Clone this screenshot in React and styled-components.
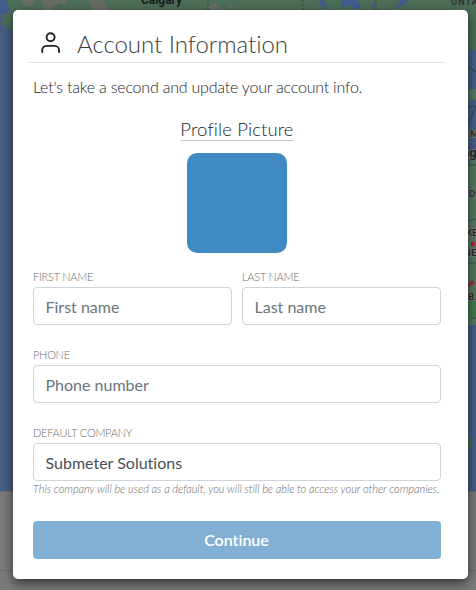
import styled, { createGlobalStyle } from "styled-components"
import { useState } from "react"

const GlobalStyle = createGlobalStyle`
* {
  box-sizing: border-box;
}
body {
  margin: 0;
  overflow: hidden;
  background-color: #797979;
  color: #212529;
  font-family: Lato, "Liberation Sans", sans-serif;
  font-size: 16px;
  line-height: 1.5;
  font-variant-ligatures: none;
}
`
const Container = styled.div`
height: 100vh;
padding: 10px 8px 11px 13px;
`
const Map = styled.svg`
position: absolute;
top: 0;
left: 0;
z-index: -1;
`
const Modal = styled.div`
width: 455px;
height: 569px;
padding: 16px 23px 20px 16px;
border-radius: 5px;
background-color: white;
box-shadow: 0 4px 12px rgba(0, 0, 0, 0.6);
`
const Header = styled.div`
display: flex;
align-items: center;
height: 37px;
padding-left: 11px;
border-bottom: 1px solid #dee2e6;
`
const Title = styled.h1`
margin: 0 0 0 15px;
font-size: 24px;
font-weight: 300;
line-height: 36px;
letter-spacing: -0.03px;
color: #3a3e42;
`
const Body = styled.div`
padding: 12px 4px 0;
`
const Intro = styled.p`
margin: 0;
font-weight: 300;
letter-spacing: -0.21px;
`
const Picture = styled.div`
display: flex;
flex-direction: column;
align-items: center;
margin-top: 20px;
`
const PictureTitle = styled.span`
height: 22px;
margin-bottom: 12px;
border-bottom: 1px solid #c8c8c8;
font-size: 18.5px;
font-weight: 300;
line-height: 20px;
letter-spacing: 0.12px;
`
const Avatar = styled.div`
width: 100px;
height: 100px;
border-radius: 10px;
background-color: #3f8ac2;
`
const Row = styled.div`
display: flex;
gap: 10px;
margin-top: ${props => props.$first ? "16px" : "22px"};
`
const Field = styled.label`
flex: 1;
min-width: 0;
display: flex;
flex-direction: column;
`
const Label = styled.span`
height: 18px;
font-size: 11px;
font-weight: 300;
line-height: 16px;
letter-spacing: -0.25px;
color: #6c6c6c;
text-transform: uppercase;
`
const Input = styled.input`
width: 100%;
height: 38px;
padding: 6px 11.5px;
border: 1px solid #ced4da;
border-radius: 4px;
outline: none;
background-color: white;
color: #495057;
font: inherit;
&::placeholder {
  color: #6c757d;
  opacity: 1;
}
`
const Hint = styled.em`
height: 16px;
font-size: 11px;
font-weight: 300;
line-height: 16px;
white-space: nowrap;
letter-spacing: -0.01px;
color: #666;
`
const Button = styled.button`
width: 100%;
height: 38px;
margin-top: 24px;
padding: 0 7px 0 6px;
border: none;
border-radius: 4px;
background-color: #82b0d5;
color: white;
font: inherit;
font-weight: 600;
`

const UserIcon = () => (
  <svg width="22" height="24" viewBox="0 0 22 24" fill="none" stroke="#212529" strokeWidth="1.9" strokeLinecap="round">
    <circle cx="10.6" cy="5.2" r="4" />
    <path d="M2.2 20.1v-2a4.2 4.2 0 0 1 4.2-4.2h8.4a4.2 4.2 0 0 1 4.2 4.2v2" />
  </svg>
)

const MapBackground = () => (
  <Map width="476" height="590" fontFamily="Roboto, sans-serif" fontWeight="700" fill="#171a1b">
    <rect width="476" height="491" fill="#475e85" />
    <path d="M0 0h476v50h-8V11H13v21l-5-5-8-3 4-5-4-5z" fill="#4d6e57" />
    <path d="M20 0h16l-3 5-8 2zM41 0h27l-4 5-5-2-9 7h-6zM88 0h15l6 10H94zM207 6l8-3 7 6h-12zM228 3l5 4-3 3z" fill="#6a6d66" />
    <path d="M0 0h6l4 8-3 6-7 1zM318 0h5l3 5-3 5zM341 0h16l5 7-6 3-7-5-6 4zM371 4l5-2-2 8zM401 0h8l-7 6-8 3z" fill="#435d8d" />
    <path d="M208 0v10M303 0v10M376 0v10" stroke="#35483e" strokeDasharray="2 2" />
    {/* east coast */}
    <path d="M468 89h8v12l-4-2-4 4zM476 155v170h-8V164z" fill="#577762" />
    <path d="M468 67l8 5" stroke="#313e3c" />
    <path d="M468 107l8-1M476 107l-8 16M468 165h8M468 221l8-2M468 263h8M468 318h8" stroke="#313e3c" strokeDasharray="2 1" fill="none" />
    <path d="M468 303l8-12v25l-8 4z" fill="#437a50" />
    <rect x="471" y="242" width="4" height="4" fill="#a52730" />
    <path d="M468 286l3-3 3-1" stroke="#a52730" strokeWidth="3" fill="none" />
    <ellipse cx="468" cy="442" rx="4" ry="6" fill="#456c50" />
    <text x="141" y="4" fontSize="12" textLength="41">Calgary</text>
    <text x="451" y="5" fontSize="9" letterSpacing="1" fill="#303433">ONTARIO</text>
    <g fontSize="9.500" fontWeight="500" fill="#252928" stroke="#747b75" strokeWidth="2" paintOrder="stroke">
      <text x="470" y="137">M</text>
      <text x="462" y="157" fontSize="13" fontWeight="700">ng</text>
      <text x="469" y="197">D</text>
      <text x="466" y="236">KE</text>
      <text x="464" y="256" letterSpacing="0.5">NE</text>
      <text x="468" y="300">B.</text>
    </g>
    <rect y="491" width="476" height="99" fill="#7b7b7b" />
    <path d="M0 491.500h476M0 570.500h476" stroke="#6e6e6e" />
  </Map>
)

export default function App() {
  const [form, setForm] = useState({ first: "", last: "", phone: "", company: "Submeter Solutions" });

  const handleChange = (e) => {
    setForm({ ...form, [e.target.name]: e.target.value });
  };

  return (
    <Container>
      <GlobalStyle />
      <MapBackground />
      <Modal>
        <Header>
          <UserIcon />
          <Title>Account Information</Title>
        </Header>
        <Body>
          <Intro>Let's take a second and update your account info.</Intro>
          <Picture>
            <PictureTitle>Profile Picture</PictureTitle>
            <Avatar />
          </Picture>
          <Row $first>
            <Field>
              <Label>First name</Label>
              <Input name="first" placeholder="First name" value={form.first} onChange={handleChange} />
            </Field>
            <Field>
              <Label>Last name</Label>
              <Input name="last" placeholder="Last name" value={form.last} onChange={handleChange} />
            </Field>
          </Row>
          <Row>
            <Field>
              <Label>Phone</Label>
              <Input name="phone" placeholder="Phone number" value={form.phone} onChange={handleChange} />
            </Field>
          </Row>
          <Row>
            <Field>
              <Label>Default company</Label>
              <Input name="company" value={form.company} onChange={handleChange} />
              <Hint>This company will be used as a default, you will still be able to access your other companies.</Hint>
            </Field>
          </Row>
          <Button>Continue</Button>
        </Body>
      </Modal>
    </Container>
  )
}
